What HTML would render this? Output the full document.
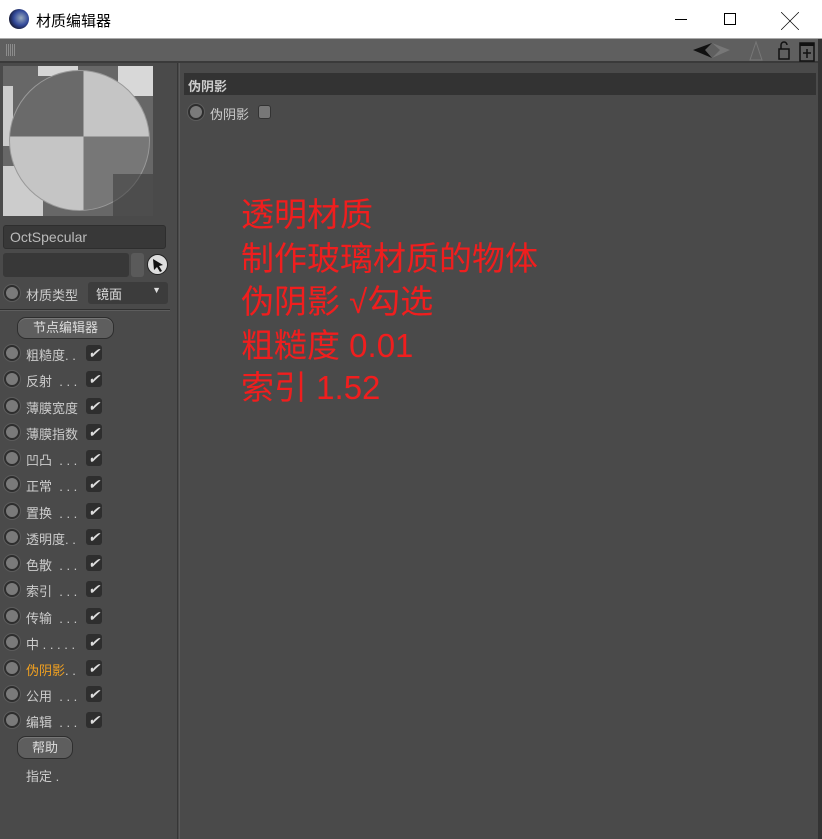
<!DOCTYPE html>
<html><head><meta charset="utf-8"><style>
*{margin:0;padding:0;box-sizing:border-box}
body{width:822px;height:839px;background:#4a4a4a;position:relative;overflow:hidden;font-family:"Liberation Sans","Noto Sans CJK SC",sans-serif;color:#ccc}
.a{position:absolute}
.t{font-size:13px;white-space:nowrap}
.radio{position:absolute;width:16px;height:16px;border-radius:50%;background:#7a7a7a;border:2px solid #2e2e2e;box-shadow:0 0 0 1px #5c5c5c}
.cb{position:absolute;width:16px;height:16px;background:#2e2e2e;border-radius:3px;color:#ddd;font-size:14px;line-height:16px;text-align:center;font-style:italic}
.btn{position:absolute;background:#5e5e5e;border:1px solid #2e2e2e;border-radius:9px;color:#ddd;font-size:13px;text-align:center;box-shadow:inset 0 1px 0 #777}
.red{position:absolute;left:241px;color:#f01e1e;font-size:33px;line-height:43px;font-family:"Liberation Sans","Noto Sans CJK SC",sans-serif;white-space:nowrap}
</style></head><body>
<div class="a" style="left:0;top:0;width:822px;height:39px;background:#fff;border-bottom:1px solid #aaa"></div>
<div class="a" style="left:9px;top:9px;width:20px;height:20px;border-radius:50%;background:radial-gradient(circle at 60% 45%,#9ab 0,#334a9a 45%,#112 80%)"></div>
<div class="a t" style="left:36px;top:10px;font-size:15px;color:#000">材质编辑器</div>
<div class="a" style="left:675px;top:19px;width:12px;height:1px;background:#000"></div>
<div class="a" style="left:724px;top:13px;width:12px;height:12px;border:1px solid #000"></div>
<div class="a t" style="left:781px;top:8px;font-size:18px;color:#000">╳</div>
<div class="a" style="left:0;top:39px;width:822px;height:24px;background:#5f5f5f;border-bottom:2px solid #3a3a3a"></div>
<div class="a" style="left:6px;top:44px;width:10px;height:12px;background:repeating-linear-gradient(90deg,#aaa 0 1px,transparent 1px 2px),#5f5f5f;opacity:.6"></div>
<svg class="a" style="left:690px;top:40px" width="132" height="22"><polygon points="3,10 22,3 15,10 22,18" fill="#111"/><polygon points="22,3 40,10 22,18 30,10" fill="#777"/><polygon points="66,2 60,20 72,20" fill="none" stroke="#777"/><rect x="89" y="9" width="10" height="10" fill="none" stroke="#111" stroke-width="1.5"/><path d="M91 9V5a3 3 0 0 1 6 0" fill="none" stroke="#111" stroke-width="1.5"/><rect x="110" y="3" width="14" height="18" fill="none" stroke="#111" stroke-width="1.5"/><rect x="110" y="3" width="14" height="3" fill="#111"/><path d="M117 9v9M113 13h8" stroke="#111" stroke-width="1.5"/></svg>
<div class="a" style="left:818px;top:39px;width:4px;height:800px;background:#333"></div>
<div class="a" style="left:177px;top:63px;width:1px;height:776px;background:#363636"></div>
<div class="a" style="left:179px;top:63px;width:1px;height:776px;background:#5a5a5a"></div>
<div class="a" style="left:3px;top:66px;width:150px;height:150px;overflow:hidden;background:#676767">
<div class="a" style="left:35px;top:0;width:40px;height:10px;background:#d5d5d5"></div>
<div class="a" style="left:115px;top:0;width:35px;height:30px;background:#d8d8d8"></div>
<div class="a" style="left:0;top:20px;width:10px;height:60px;background:#ccc"></div>
<div class="a" style="left:0;top:100px;width:40px;height:50px;background:#ccc"></div>
<div class="a" style="left:6px;top:4px;width:141px;height:141px;border-radius:50%;background:conic-gradient(from 0deg at 53% 47%,#c5c5c5 0 90deg,#777 90deg 180deg,#c5c5c5 180deg 270deg,#6a6a6a 270deg 360deg);border:1px solid #999"></div>
<div class="a" style="left:110px;top:108px;width:40px;height:42px;background:#333;opacity:.5"></div>
</div>
<div class="a t" style="left:3px;top:225px;width:163px;height:24px;background:#383838;border:1px solid #2e2e2e;border-radius:3px;padding:3px 6px;color:#bbb;font-size:14px">OctSpecular</div>
<div class="a" style="left:3px;top:253px;width:126px;height:24px;background:#383838;border-radius:3px"></div>
<div class="a" style="left:131px;top:253px;width:13px;height:24px;background:#5a5a5a;border-radius:3px"></div>
<div class="a" style="left:147px;top:254px;width:21px;height:21px;border-radius:50%;background:#ddd;border:1px solid #222"></div>
<svg class="a" style="left:150px;top:257px" width="16" height="16"><path d="M3 2L13 8 9 9 12 14 10 15 7 10 4 13Z" fill="#111"/></svg>
<div class="radio" style="left:4px;top:285px"></div>
<div class="a t" style="left:26px;top:285px">材质类型</div>
<div class="a t" style="left:88px;top:282px;width:80px;height:22px;background:#3c3c3c;border-radius:3px;padding:2px 8px;color:#ddd">镜面<span style="position:absolute;right:7px;top:3px;font-size:9px">▼</span></div>
<div class="a" style="left:0;top:309px;width:170px;height:1px;background:#2f2f2f"></div>
<div class="a" style="left:0;top:310px;width:170px;height:1px;background:#5d5d5d"></div>
<div class="btn" style="left:17px;top:317px;width:97px;height:22px;line-height:20px">节点编辑器</div>

<div class="radio" style="left:4px;top:345px"></div><div class="a t" style="left:26px;top:345px">粗糙度. .</div><div class="cb" style="left:86px;top:345px">✔</div>
<div class="radio" style="left:4px;top:371px"></div><div class="a t" style="left:26px;top:371px">反射 &nbsp;. . .</div><div class="cb" style="left:86px;top:371px">✔</div>
<div class="radio" style="left:4px;top:398px"></div><div class="a t" style="left:26px;top:398px">薄膜宽度</div><div class="cb" style="left:86px;top:398px">✔</div>
<div class="radio" style="left:4px;top:424px"></div><div class="a t" style="left:26px;top:424px">薄膜指数</div><div class="cb" style="left:86px;top:424px">✔</div>
<div class="radio" style="left:4px;top:450px"></div><div class="a t" style="left:26px;top:450px">凹凸 &nbsp;. . .</div><div class="cb" style="left:86px;top:450px">✔</div>
<div class="radio" style="left:4px;top:476px"></div><div class="a t" style="left:26px;top:476px">正常 &nbsp;. . .</div><div class="cb" style="left:86px;top:476px">✔</div>
<div class="radio" style="left:4px;top:503px"></div><div class="a t" style="left:26px;top:503px">置换 &nbsp;. . .</div><div class="cb" style="left:86px;top:503px">✔</div>
<div class="radio" style="left:4px;top:529px"></div><div class="a t" style="left:26px;top:529px">透明度. .</div><div class="cb" style="left:86px;top:529px">✔</div>
<div class="radio" style="left:4px;top:555px"></div><div class="a t" style="left:26px;top:555px">色散 &nbsp;. . .</div><div class="cb" style="left:86px;top:555px">✔</div>
<div class="radio" style="left:4px;top:581px"></div><div class="a t" style="left:26px;top:581px">索引 &nbsp;. . .</div><div class="cb" style="left:86px;top:581px">✔</div>
<div class="radio" style="left:4px;top:608px"></div><div class="a t" style="left:26px;top:608px">传输 &nbsp;. . .</div><div class="cb" style="left:86px;top:608px">✔</div>
<div class="radio" style="left:4px;top:634px"></div><div class="a t" style="left:26px;top:634px">中 . . . . .</div><div class="cb" style="left:86px;top:634px">✔</div>
<div class="radio" style="left:4px;top:660px"></div><div class="a t" style="left:26px;top:660px;color:#f0a020">伪阴影<span style="color:#ccc">. .</span></div><div class="cb" style="left:86px;top:660px">✔</div>
<div class="radio" style="left:4px;top:686px"></div><div class="a t" style="left:26px;top:686px">公用 &nbsp;. . .</div><div class="cb" style="left:86px;top:686px">✔</div>
<div class="radio" style="left:4px;top:712px"></div><div class="a t" style="left:26px;top:712px">编辑 &nbsp;. . .</div><div class="cb" style="left:86px;top:712px">✔</div>
<div class="btn" style="left:17px;top:736px;width:56px;height:23px;line-height:21px">帮助</div>
<div class="a t" style="left:26px;top:766px">指定 .</div>

<div class="a t" style="left:184px;top:73px;width:632px;height:22px;background:#333;padding:3px 4px;color:#ccc;font-weight:bold">伪阴影</div>
<div class="radio" style="left:188px;top:104px"></div>
<div class="a t" style="left:210px;top:104px">伪阴影</div>
<div class="a" style="left:258px;top:105px;width:13px;height:14px;background:#777;border:1px solid #333;border-radius:3px"></div>

<div class="red" style="top:193px">透明材质</div>
<div class="red" style="top:237px">制作玻璃材质的物体</div>
<div class="red" style="top:280px">伪阴影 √勾选</div>
<div class="red" style="top:324px">粗糙度 0.01</div>
<div class="red" style="top:366px">索引 1.52</div>
</body></html>
